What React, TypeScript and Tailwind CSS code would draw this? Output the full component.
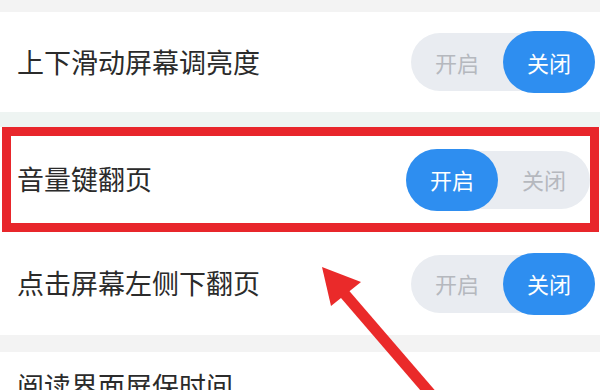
type Setting = {
  label: string;
  on: boolean;
};

function Toggle({ on }: { on: boolean }) {
  return (
    <div className="flex h-[58px] w-[184px] items-center rounded-full bg-[#e9ecf1] text-[22px]">
      <div
        className={
          on
            ? "flex h-[62px] w-[92px] items-center justify-center rounded-full bg-[#2e8ef0] text-white"
            : "flex h-[62px] w-[92px] items-center justify-center text-[#b5b8be]"
        }
      >
        开启
      </div>
      <div
        className={
          on
            ? "flex h-[62px] w-[92px] items-center justify-center text-[#b5b8be]"
            : "flex h-[62px] w-[92px] items-center justify-center rounded-full bg-[#2e8ef0] text-white"
        }
      >
        关闭
      </div>
    </div>
  );
}

const rows: Setting[] = [
  { label: "上下滑动屏幕调亮度", on: false },
  { label: "音量键翻页", on: true },
  { label: "点击屏幕左侧下翻页", on: false },
];

export default function App() {
  return (
    <div
      className="relative h-[390px] w-[600px] overflow-hidden bg-white text-[#2b2b2b]"
      style={{ fontFamily: '"Noto Sans CJK SC", "Noto Sans", sans-serif' }}
    >
      <div className="h-[12px] bg-[#f3f3f3]" />

      <div className="flex h-[100px] items-center justify-between pl-[17px] pr-[5px]">
        <span className="text-[27px]">{rows[0].label}</span>
        <Toggle on={rows[0].on} />
      </div>

      <div className="h-[15px] bg-[#eef4f2]" />

      <div className="ml-[2px] mr-[1px] flex h-[105px] items-center justify-between border-[9px] border-[#e8262b] pl-[6px] pr-0">
        <span className="text-[27px]">{rows[1].label}</span>
        <Toggle on={rows[1].on} />
      </div>

      <div className="flex h-[103px] items-center justify-between pl-[17px] pr-[5px]">
        <span className="text-[27px]">{rows[2].label}</span>
        <Toggle on={rows[2].on} />
      </div>

      <div className="h-[17px] bg-[#f3f3f3]" />

      <div className="pl-[17px] pt-[14px]">
        <span className="text-[27px]">阅读界面屏保时间</span>
      </div>

      {/* arrow pointing at the highlighted row */}
      <svg
        className="absolute left-0 top-0"
        width="600"
        height="390"
        viewBox="0 0 600 390"
      >
        <line x1="343" y1="292" x2="436" y2="400" stroke="#ea2a2a" strokeWidth="11" />
        <polygon points="322,267 361,282 331,306" fill="#ea2a2a" />
      </svg>
    </div>
  );
}
